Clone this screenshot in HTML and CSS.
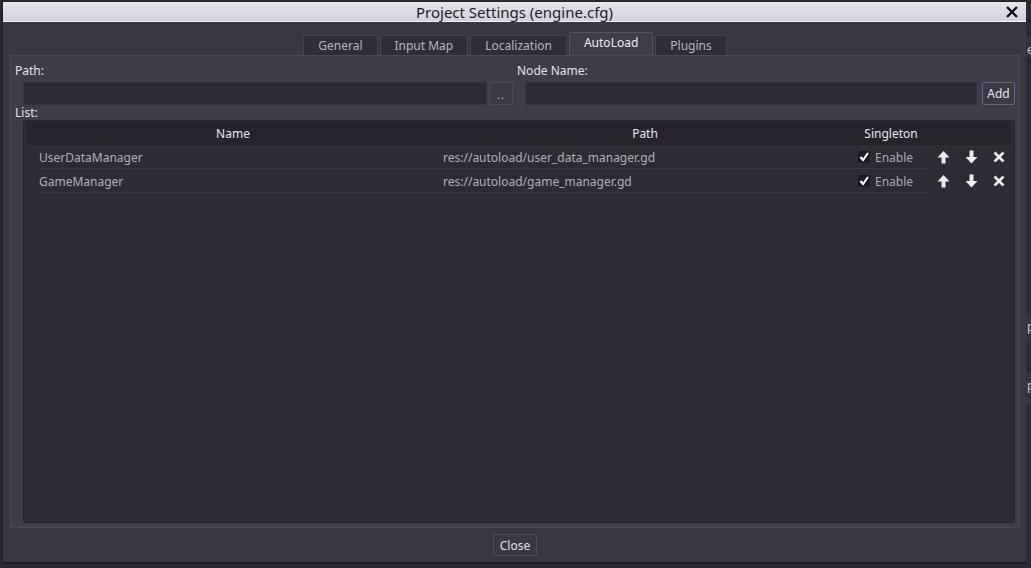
FILE: index.html
```html
<!DOCTYPE html>
<html>
<head>
<meta charset="utf-8">
<link rel="stylesheet" href="styles.css">
</head>
<body>
<div class="screen">
  <div class="dialog">
    <div class="titlebar">
      <span class="title">Project Settings (engine.cfg)</span>
      <svg class="close-x" width="12" height="12" viewBox="0 0 12 12"><path d="M1 1 L11 11 M11 1 L1 11" stroke="#111" stroke-width="2.4" fill="none"/></svg>
    </div>
    <div class="body">
      <div class="tabs">
        <div class="tab">General</div>
        <div class="tab">Input Map</div>
        <div class="tab">Localization</div>
        <div class="tab active">AutoLoad</div>
        <div class="tab">Plugins</div>
      </div>
      <div class="panel">
        <div class="fields">
          <div class="field">
            <div class="label">Path:</div>
            <div class="field-row">
              <div class="input path-input"></div>
              <div class="btn dots">..</div>
            </div>
          </div>
          <div class="field field-node">
            <div class="label">Node Name:</div>
            <div class="field-row">
              <div class="input node-input"></div>
              <div class="btn add">Add</div>
            </div>
          </div>
        </div>
        <div class="label list-label">List:</div>
        <div class="tree">
          <div class="tree-header">
            <div class="col col-name">Name</div>
            <div class="col col-path">Path</div>
            <div class="col col-single">Singleton</div>
          </div>
          <div class="tree-row">
            <div class="cell c-name">UserDataManager</div>
            <div class="cell c-path">res://autoload/user_data_manager.gd</div>
            <div class="cell c-single">
              <span class="check"><svg width="12" height="12" viewBox="0 0 12 12"><path d="M2.5 6 L5 9 L10 2" stroke="#fff" stroke-width="2" fill="none"/></svg></span>
              <span class="enable">Enable</span>
            </div>
            <div class="actions">
              <svg width="13" height="14" viewBox="0 0 13 14"><path d="M6.5 1 L12.5 7.5 H8.5 V13.5 H4.5 V7.5 H0.5 Z" fill="#ececf0"/></svg>
              <svg width="13" height="14" viewBox="0 0 13 14"><path d="M6.5 13.5 L12.5 7 H8.5 V0.5 H4.5 V7 H0.5 Z" fill="#ececf0"/></svg>
              <svg width="12" height="12" viewBox="0 0 12 12"><path d="M1.5 1.5 L10.5 10.5 M10.5 1.5 L1.5 10.5" stroke="#ececf0" stroke-width="2.6" fill="none"/></svg>
            </div>
          </div>
          <div class="tree-row">
            <div class="cell c-name">GameManager</div>
            <div class="cell c-path">res://autoload/game_manager.gd</div>
            <div class="cell c-single">
              <span class="check"><svg width="12" height="12" viewBox="0 0 12 12"><path d="M2.5 6 L5 9 L10 2" stroke="#fff" stroke-width="2" fill="none"/></svg></span>
              <span class="enable">Enable</span>
            </div>
            <div class="actions">
              <svg width="13" height="14" viewBox="0 0 13 14"><path d="M6.5 1 L12.5 7.5 H8.5 V13.5 H4.5 V7.5 H0.5 Z" fill="#ececf0"/></svg>
              <svg width="13" height="14" viewBox="0 0 13 14"><path d="M6.5 13.5 L12.5 7 H8.5 V0.5 H4.5 V7 H0.5 Z" fill="#ececf0"/></svg>
              <svg width="12" height="12" viewBox="0 0 12 12"><path d="M1.5 1.5 L10.5 10.5 M10.5 1.5 L1.5 10.5" stroke="#ececf0" stroke-width="2.6" fill="none"/></svg>
            </div>
          </div>
        </div>
      </div>
      <div class="footer">
        <div class="btn close-btn">Close</div>
      </div>
    </div>
  </div>
  <div class="edge">
    <div class="edge-dark d1"></div>
    <div class="edge-band e1">e</div>
    <div class="edge-dark d2"></div>
    <div class="edge-band e2">p</div>
    <div class="edge-dark d3"></div>
    <div class="edge-band e3">p</div>
    <div class="edge-dark d4"></div>
  </div>
</div>
</body>
</html>
```

FILE: styles.css
```css
* { box-sizing: border-box; }
html, body {
  margin: 0;
  padding: 0;
  background: #28272e;
  font-family: "Noto Sans", "DejaVu Sans", sans-serif;
  font-size: 12px;
  overflow: hidden;
}
.screen {
  width: 1031px;
  height: 568px;
  display: flex;
  align-items: flex-start;
  background: #2a2930;
}
.dialog {
  margin: 2px 0 0 3px;
  width: 1023px;
  height: 560px;
  display: flex;
  flex-direction: column;
  box-shadow: 0 1px 2px rgba(0,0,0,0.6);
}
.titlebar {
  height: 20px;
  background: linear-gradient(#e6e5ec, #d3d2da);
  border-bottom: 1px solid #f4f4f8;
  display: flex;
  align-items: center;
  justify-content: center;
  position: relative;
  color: #1c1c20;
}
.title {
  font-size: 15px;
  line-height: 20px;
}
.close-x {
  position: absolute;
  right: 8px;
  top: 4px;
}
.body {
  flex: 1;
  background: #393842;
  display: flex;
  flex-direction: column;
}
.tabs {
  display: flex;
  justify-content: center;
  align-items: flex-end;
  gap: 2px;
  margin-top: 10px;
  height: 23px;
  padding-left: 1px;
}
.tab {
  height: 20px;
  padding: 0 14px;
  background: #2f2e37;
  border: 1px solid #46454f;
  border-bottom: none;
  color: #b6b5bf;
  font-size: 12px;
  line-height: 19px;
  border-radius: 2px 2px 0 0;
}
.tab.active {
  height: 23px;
  background: #3f3e48;
  border-color: #55545e;
  color: #ececf0;
  line-height: 20px;
}
.panel {
  margin: 0 6px 0 7px;
  height: 473px;
  background: #3e3d47;
  border: 1px solid #4a4953;
  display: flex;
  flex-direction: column;
  padding: 0 4px 4px 4px;
}
.fields {
  display: flex;
  gap: 4px;
  margin-top: 7px;
}
.field {
  width: 498px;
  display: flex;
  flex-direction: column;
}
.label {
  color: #e2e2e8;
  font-size: 12px;
  line-height: 16px;
  height: 19px;
}
.field-row {
  display: flex;
  margin-left: 8px;
  gap: 2px;
  height: 23px;
}
.input {
  height: 23px;
  background: #2c2b33;
  border: 1px solid #34333c;
  border-radius: 2px;
}
.path-input { width: 464px; }
.node-input { width: 452px; margin-right: 3px; }
.btn {
  height: 23px;
  background: #3b3a44;
  border: 1px solid #4c4b56;
  border-radius: 2px;
  color: #d8d8de;
  display: flex;
  align-items: center;
  justify-content: center;
  font-size: 12px;
}
.dots { width: 24px; font-size: 10px; letter-spacing: 1px; padding-top: 2px; }
.add {
  width: 33px;
  border-color: #5a6d86;
  color: #e2e2e8;
}
.list-label {
  margin-top: 2px;
  height: 13px;
  line-height: 12px;
}
.tree {
  margin-left: 8px;
  flex: 1;
  background: #2d2c35;
  border: 1px solid #26252c;
  border-radius: 2px;
  padding: 1px 3px;
}
.tree-header {
  display: flex;
  height: 23px;
  background: #25242b;
  color: #e8e8ec;
  align-items: center;
}
.col { text-align: center; }
.col-name { width: 412px; }
.col-path { width: 412px; }
.col-single { width: 80px; }
.tree-row {
  display: flex;
  height: 24px;
  align-items: center;
  color: #b0afb8;
  position: relative;
}
.tree-row::after {
  content: "";
  position: absolute;
  left: 11px;
  width: 893px;
  bottom: 0;
  height: 1px;
  background: #3a3942;
}
.cell { white-space: nowrap; }
.c-name { width: 416px; padding-left: 12px; }
.c-path { width: 415px; }
.c-single {
  width: 79px;
  display: flex;
  align-items: center;
  gap: 5px;
}
.check {
  width: 12px;
  height: 12px;
  background: #1c1b21;
  border-radius: 2px;
  display: flex;
}
.enable { color: #a9a8b2; }
.actions {
  display: flex;
  align-items: center;
  gap: 15px;
  padding-left: 0;
}
.footer {
  flex: 1;
  display: flex;
  justify-content: center;
  align-items: flex-start;
  padding-top: 6px;
  padding-left: 1px;
}
.close-btn {
  width: 44px;
  height: 22px;
  border-color: #4e4d58;
  background: #3a3943;
  color: #e0e0e6;
}
.edge {
  flex: 1;
  height: 568px;
  display: flex;
  flex-direction: column;
  background: #2b2a32;
  overflow: hidden;
}
.edge-dark { background: #2b2a32; }
.edge-band {
  background: #34333c;
  color: #c4c4ca;
  font-size: 12px;
  line-height: 16px;
  padding: 6px 0 0 1px;
  white-space: nowrap;
}
.d1 { height: 36px; }
.e1 { height: 22px; }
.d2 { height: 255px; }
.e2 { height: 30px; }
.d3 { height: 29px; }
.e3 { height: 33px; }
.d4 { flex: 1; }
```
